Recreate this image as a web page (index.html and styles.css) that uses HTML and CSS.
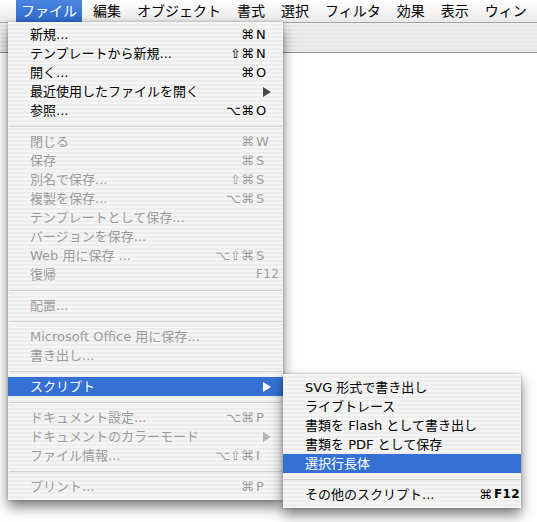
FILE: index.html
```html
<!DOCTYPE html>
<html lang="ja">
<head>
<meta charset="utf-8">
<title>ファイル</title>
<link rel="stylesheet" href="styles.css">
</head>
<body>
<div class="menubar">
  <span class="title active">ファイル</span>
  <span class="title">編集</span>
  <span class="title">オブジェクト</span>
  <span class="title">書式</span>
  <span class="title">選択</span>
  <span class="title">フィルタ</span>
  <span class="title">効果</span>
  <span class="title">表示</span>
  <span class="title">ウィン</span>
</div>
<div class="window">
  <div class="toolbar"></div>
  <div class="content"></div>
</div>

<div class="menu file-menu">
  <div class="item"><span class="label">新規...</span><span class="mods">⌘</span><span class="key">N</span></div>
  <div class="item"><span class="label">テンプレートから新規...</span><span class="mods">⇧⌘</span><span class="key">N</span></div>
  <div class="item"><span class="label">開く...</span><span class="mods">⌘</span><span class="key">O</span></div>
  <div class="item"><span class="label">最近使用したファイルを開く</span><span class="mods"></span><span class="key"><svg class="arrow" width="8" height="10" viewBox="0 0 8 10"><polygon points="0,0 8,5 0,10"/></svg></span></div>
  <div class="item"><span class="label">参照...</span><span class="mods">⌥⌘</span><span class="key">O</span></div>
  <div class="sep"></div>
  <div class="item off"><span class="label">閉じる</span><span class="mods">⌘</span><span class="key">W</span></div>
  <div class="item off"><span class="label">保存</span><span class="mods">⌘</span><span class="key">S</span></div>
  <div class="item off"><span class="label">別名で保存...</span><span class="mods">⇧⌘</span><span class="key">S</span></div>
  <div class="item off"><span class="label">複製を保存...</span><span class="mods">⌥⌘</span><span class="key">S</span></div>
  <div class="item off"><span class="label">テンプレートとして保存...</span><span class="mods"></span><span class="key"></span></div>
  <div class="item off"><span class="label">バージョンを保存...</span><span class="mods"></span><span class="key"></span></div>
  <div class="item off"><span class="label">Web 用に保存 ...</span><span class="mods">⌥⇧⌘</span><span class="key">S</span></div>
  <div class="item off"><span class="label">復帰</span><span class="mods"></span><span class="key fkey">F12</span></div>
  <div class="sep"></div>
  <div class="item off"><span class="label">配置...</span><span class="mods"></span><span class="key"></span></div>
  <div class="sep"></div>
  <div class="item off"><span class="label">Microsoft Office 用に保存...</span><span class="mods"></span><span class="key"></span></div>
  <div class="item off"><span class="label">書き出し...</span><span class="mods"></span><span class="key"></span></div>
  <div class="sep"></div>
  <div class="item hi"><span class="label">スクリプト</span><span class="mods"></span><span class="key"><svg class="arrow" width="8" height="10" viewBox="0 0 8 10"><polygon points="0,0 8,5 0,10"/></svg></span></div>
  <div class="sep"></div>
  <div class="item off"><span class="label">ドキュメント設定...</span><span class="mods">⌥⌘</span><span class="key">P</span></div>
  <div class="item off"><span class="label">ドキュメントのカラーモード</span><span class="mods"></span><span class="key"><svg class="arrow" width="8" height="10" viewBox="0 0 8 10"><polygon points="0,0 8,5 0,10"/></svg></span></div>
  <div class="item off"><span class="label">ファイル情報...</span><span class="mods">⌥⇧⌘</span><span class="key">I</span></div>
  <div class="sep"></div>
  <div class="item off"><span class="label">プリント...</span><span class="mods">⌘</span><span class="key">P</span></div>
</div>

<div class="menu sub-menu">
  <div class="item"><span class="label">SVG 形式で書き出し</span></div>
  <div class="item"><span class="label">ライブトレース</span></div>
  <div class="item"><span class="label">書類を Flash として書き出し</span></div>
  <div class="item"><span class="label">書類を PDF として保存</span></div>
  <div class="item hi"><span class="label">選択行長体</span></div>
  <div class="sep"></div>
  <div class="item"><span class="label">その他のスクリプト...</span><span class="mods">⌘</span><span class="key fkey bold">F12</span></div>
</div>
</body>
</html>
```

FILE: styles.css
```css
html, body {
  margin: 0;
  padding: 0;
}
body {
  width: 537px;
  height: 522px;
  overflow: hidden;
  background: #ffffff;
  position: relative;
  font-family: "DejaVu Sans", "Noto Sans CJK JP", sans-serif;
  color: #000;
}

/* menu bar */
.menubar {
  height: 22px;
  display: flex;
  align-items: stretch;
  gap: 6px;
  padding-left: 16px;
  overflow: hidden;
  background: linear-gradient(#ffffff, #f3f3f3 60%, #e9e9e9);
  font-size: 14px;
  line-height: 22px;
  white-space: nowrap;
}
.title {
  padding: 0 5px;
  color: #000;
  flex: none;
}
.title.active {
  background: linear-gradient(#4a86e0, #2f68cd);
  color: #fff;
}

/* background window */
.window {
  display: flex;
  flex-direction: column;
}
.toolbar {
  height: 29px;
  border-top: 1px solid #a4a4a4;
  border-bottom: 1px solid #8e8e8e;
  background: repeating-linear-gradient(to bottom, #efefef 0 2px, #e6e6e6 2px 4px);
}
.content {
  height: 469px;
  background: #fff;
}

/* menus */
.menu {
  position: absolute;
  box-sizing: border-box;
  background: repeating-linear-gradient(to bottom, #f5f5f5 0 2px, #ededed 2px 4px);
  box-shadow: 0 7px 12px rgba(0, 0, 0, 0.5), 0 0 3px rgba(0, 0, 0, 0.25);
  font-size: 13px;
  white-space: nowrap;
}
.file-menu {
  left: 8px;
  top: 22px;
  width: 275px;
  padding: 3px 0 4px;
}
.sub-menu {
  left: 283px;
  top: 374px;
  width: 238px;
  padding: 4px 0 4px;
}
.item {
  display: flex;
  align-items: center;
  height: 19px;
  line-height: 19px;
  padding: 0 5px 0 22px;
}
.label {
  flex: 1;
}
.mods {
  text-align: right;
  padding-right: 2px;
  font-size: 13px;
}
.key {
  width: 22px;
  text-align: left;
  display: flex;
  align-items: center;
}
.key .arrow {
  margin-left: 7px;
  fill: #4a4a4a;
}
.fkey {
  font-size: 12px;
  letter-spacing: 0.3px;
}
.bold {
  font-weight: bold;
}
.item.off {
  color: #9c9c9c;
}
.item.off .arrow {
  fill: #b4b4b4;
}
.item.hi {
  background: #3571d4;
  color: #fff;
}
.item.hi .arrow {
  fill: #fff;
}
.sep {
  height: 12px;
  display: flex;
  align-items: center;
}
.sep::before {
  content: "";
  flex: 1;
  margin: 0 1px;
  border-top: 1px solid #d2d2d2;
}
```
